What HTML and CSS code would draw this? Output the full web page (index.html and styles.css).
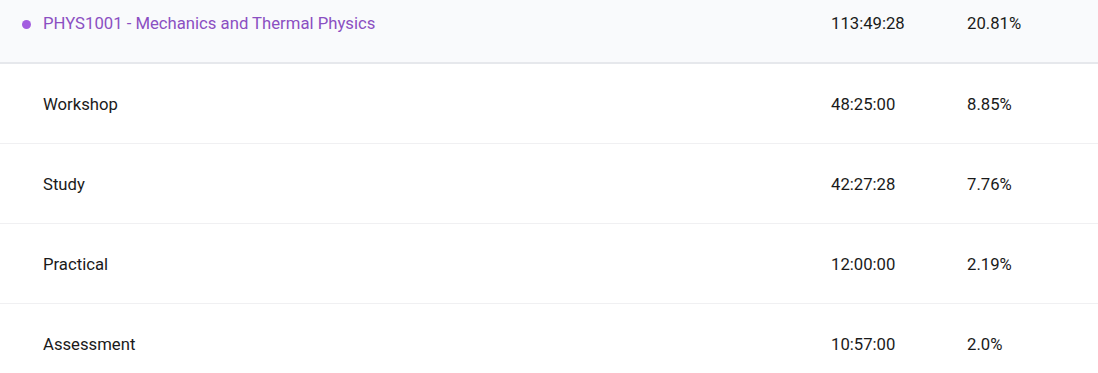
FILE: index.html
```html
<!DOCTYPE html>
<html>
<head>
<meta charset="utf-8">
<link rel="stylesheet" href="styles.css">
</head>
<body>
<div class="table">
  <div class="row head">
    <div class="name"><span class="dot"></span>PHYS1001 - Mechanics and Thermal Physics</div>
    <div class="time">113:49:28</div>
    <div class="pct">20.81%</div>
  </div>
  <div class="row item">
    <div class="name">Workshop</div>
    <div class="time">48:25:00</div>
    <div class="pct">8.85%</div>
  </div>
  <div class="row item">
    <div class="name">Study</div>
    <div class="time">42:27:28</div>
    <div class="pct">7.76%</div>
  </div>
  <div class="row item">
    <div class="name">Practical</div>
    <div class="time">12:00:00</div>
    <div class="pct">2.19%</div>
  </div>
  <div class="row item">
    <div class="name">Assessment</div>
    <div class="time">10:57:00</div>
    <div class="pct">2.0%</div>
  </div>
</div>
</body>
</html>
```
FILE: styles.css
```css
html, body {
  margin: 0;
  padding: 0;
  background: #ffffff;
}
body {
  font-family: Roboto, "Liberation Sans", sans-serif;
  font-size: 16.7px;
  line-height: 24px;
  color: #1a1a1a;
}
.table {
  display: flex;
  flex-direction: column;
}
.row {
  display: grid;
  grid-template-columns: 831px 136px 1fr;
  align-items: center;
  box-sizing: border-box;
}
.head {
  height: 64px;
  align-items: start;
  padding-top: 12px;
  background: #f9fafc;
  border-bottom: 2px solid #e6e8ec;
}
.head .name {
  display: flex;
  align-items: center;
  gap: 12px;
  padding-left: 23px;
  color: #8b4fc2;
}
.dot {
  width: 9px;
  height: 9px;
  margin-left: -1px;
  border-radius: 50%;
  background: #a35de0;
}
.item {
  height: 80px;
  padding-top: 3px;
  border-bottom: 1px solid #f0f0f2;
}
.item .name {
  padding-left: 43px;
}
```
